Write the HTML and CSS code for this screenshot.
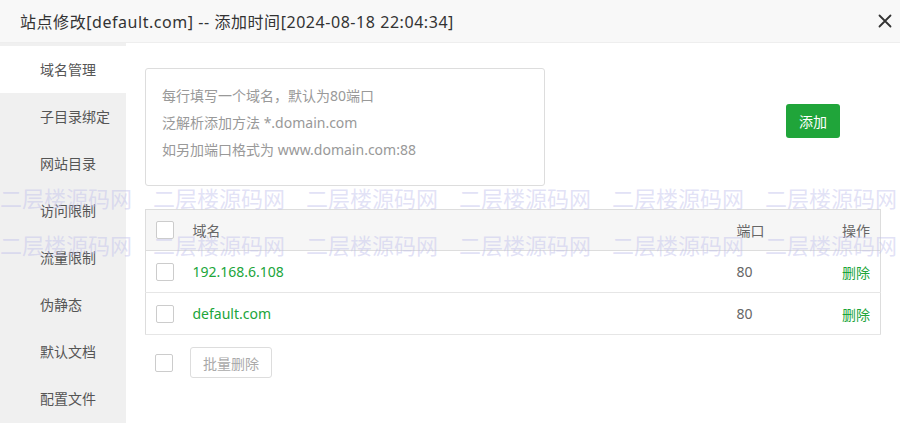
FILE: index.html
```html
<!DOCTYPE html>
<html lang="zh-CN">
<head>
    <meta charset="UTF-8">
    <title>站点修改</title>
    <link rel="stylesheet" href="styles.css">
</head>
<body>
    <div class="dialog">
        <div class="dialog-head">
            <span class="dialog-title">站点修改[default.com] -- 添加时间[2024-08-18 22:04:34]</span>
            <button class="close-btn" aria-label="关闭">
                <svg width="14" height="14" viewBox="0 0 14 14">
                    <path d="M1.5 1.5 L12.5 12.5 M12.5 1.5 L1.5 12.5" stroke="#333" stroke-width="1.8" stroke-linecap="round"/>
                </svg>
            </button>
        </div>

        <div class="dialog-body">
            <ul class="tabs">
                <li class="tab active">域名管理</li>
                <li class="tab">子目录绑定</li>
                <li class="tab">网站目录</li>
                <li class="tab">访问限制</li>
                <li class="tab">流量限制</li>
                <li class="tab">伪静态</li>
                <li class="tab">默认文档</li>
                <li class="tab">配置文件</li>
            </ul>

            <div class="panel">
                <div class="add-row">
                    <div class="domain-input">
                        <p>每行填写一个域名，默认为80端口</p>
                        <p>泛解析添加方法 *.domain.com</p>
                        <p>如另加端口格式为 www.domain.com:88</p>
                    </div>
                    <button class="btn-add">添加</button>
                </div>

                <table class="domain-table">
                    <thead>
                        <tr>
                            <th class="col-check"><span class="checkbox"></span></th>
                            <th>域名</th>
                            <th class="col-port">端口</th>
                            <th class="col-op">操作</th>
                        </tr>
                    </thead>
                    <tbody>
                        <tr>
                            <td class="col-check"><span class="checkbox"></span></td>
                            <td><a href="#" class="link">192.168.6.108</a></td>
                            <td class="col-port">80</td>
                            <td class="col-op"><a href="#" class="link">删除</a></td>
                        </tr>
                        <tr>
                            <td class="col-check"><span class="checkbox"></span></td>
                            <td><a href="#" class="link">default.com</a></td>
                            <td class="col-port">80</td>
                            <td class="col-op"><a href="#" class="link">删除</a></td>
                        </tr>
                    </tbody>
                </table>

                <div class="batch-row">
                    <span class="checkbox"></span>
                    <button class="btn-batch">批量删除</button>
                </div>
            </div>
        </div>

        <!-- watermark from the captured page -->
        <div class="watermark">
            <div class="wm-row">
                <span>二层楼源码网</span><span>二层楼源码网</span><span>二层楼源码网</span><span>二层楼源码网</span><span>二层楼源码网</span><span>二层楼源码网</span>
            </div>
            <div class="wm-row">
                <span>二层楼源码网</span><span>二层楼源码网</span><span>二层楼源码网</span><span>二层楼源码网</span><span>二层楼源码网</span><span>二层楼源码网</span>
            </div>
        </div>
    </div>
</body>
</html>
```

FILE: styles.css
```css
* {
    margin: 0;
    padding: 0;
    box-sizing: border-box;
}

body {
    font-family: "Noto Sans", "Noto Sans CJK SC", sans-serif;
    width: 900px;
    height: 423px;
    overflow: hidden;
    background: #fff;
    color: #333;
}

.dialog {
    position: relative;
    width: 900px;
    height: 423px;
    overflow: hidden;
}

.dialog-head {
    display: flex;
    align-items: center;
    justify-content: space-between;
    height: 43px;
    padding: 0 3px 0 20px;
    background: #f8f8f8;
    border-bottom: 1px solid #eee;
}

.dialog-title {
    font-size: 16px;
    letter-spacing: 0.55px;
    color: #333;
}

.close-btn {
    display: flex;
    align-items: center;
    justify-content: center;
    width: 24px;
    height: 28px;
    border: none;
    background: none;
    cursor: pointer;
}

.dialog-body {
    display: flex;
    height: 380px;
}

.tabs {
    list-style: none;
    width: 127px;
    padding-top: 3px;
    background: #f0f0f0;
}

.tab {
    height: 47px;
    line-height: 47px;
    padding-left: 40px;
    font-size: 14px;
    color: #555;
    cursor: pointer;
}

.tab.active {
    background: #fff;
}

.panel {
    flex: 1;
    padding: 25px 19px 0 19px;
}

.add-row {
    display: flex;
    align-items: flex-start;
}

.domain-input {
    width: 400px;
    height: 118px;
    padding: 13px 16px;
    border: 1px solid #ddd;
    border-radius: 3px;
    font-size: 14px;
    line-height: 27px;
    color: #999;
}

.btn-add {
    margin: 36px 0 0 241px;
    width: 54px;
    height: 34px;
    border: none;
    border-radius: 3px;
    background: #20a53a;
    color: #fff;
    font-family: inherit;
    font-size: 14px;
    cursor: pointer;
}

.domain-table {
    width: 736px;
    margin-top: 23px;
    border-collapse: collapse;
    border: 1px solid #ddd;
    font-size: 14px;
}

.domain-table th {
    height: 41px;
    background: #f6f6f6;
    font-weight: normal;
    color: #666;
    text-align: left;
    border-bottom: 1px solid #ddd;
}

.domain-table td {
    height: 42px;
    color: #666;
    border-bottom: 1px solid #e6e6e6;
}

.domain-table .col-check {
    width: 47px;
    padding-left: 10px;
}

.domain-table .col-port {
    width: 84px;
}

.domain-table .col-op {
    width: 60px;
    padding-right: 10px;
    text-align: right;
}

.checkbox {
    display: block;
    width: 18px;
    height: 18px;
    border: 1px solid #ccc;
    border-radius: 2px;
    background: #fff;
}

.link {
    color: #20a53a;
    text-decoration: none;
}

.batch-row {
    display: flex;
    align-items: center;
    gap: 17px;
    margin-top: 12px;
    padding-left: 10px;
}

.btn-batch {
    width: 82px;
    height: 31px;
    border: 1px solid #ddd;
    border-radius: 3px;
    background: #fff;
    color: #aaa;
    font-family: inherit;
    font-size: 14px;
}

.watermark {
    position: absolute;
    left: 0;
    top: 186px;
    pointer-events: none;
}

.wm-row {
    display: flex;
    gap: 22px;
    height: 47px;
    font-size: 22px;
    line-height: 24px;
    color: rgba(190, 190, 235, 0.45);
    white-space: nowrap;
}

.wm-row span {
    width: 131px;
}
```
